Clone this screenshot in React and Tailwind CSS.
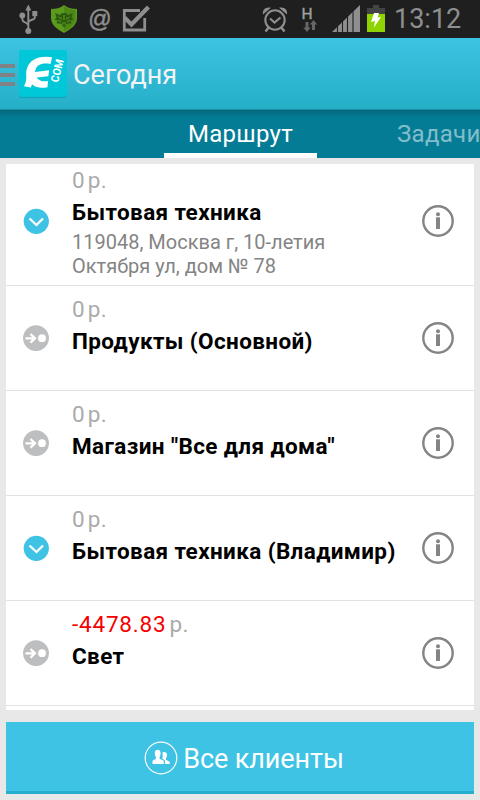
import React from "react";

const clients = [
  {
    id: 1,
    amount: "0",
    name: "Бытовая техника",
    address: ["119048, Москва г, 10-летия", "Октября ул, дом № 78"],
    visited: true,
  },
  { id: 2, amount: "0", name: "Продукты (Основной)", visited: false },
  { id: 3, amount: "0", name: 'Магазин "Все для дома"', visited: false },
  { id: 4, amount: "0", name: "Бытовая техника (Владимир)", visited: true },
  { id: 5, amount: "-4478.83", name: "Свет", visited: false },
];

const UsbIcon = () => (
  <svg className="w-5 h-8" viewBox="0 0 20 32" fill="none" stroke="#8e8e8e" strokeWidth="1.9">
    <path d="M10.300 4V28M4.300 13v3.500c0 3 6 3 6 6M16.800 11v3.500c0 3-6.500 2-6.500 5" />
    <path d="M10.300 1.500l3 6h-6z" fill="#8e8e8e" stroke="none" />
    <circle cx="4.300" cy="12.500" r="2.900" fill="#8e8e8e" stroke="none" />
    <path d="M14.300 8h5v5.200h-5z" fill="#8e8e8e" stroke="none" />
    <circle cx="10.300" cy="28" r="3" fill="#8e8e8e" stroke="none" />
  </svg>
);

const ShieldIcon = () => (
  <svg className="w-[26px] h-7" viewBox="0 0 26 28">
    <path d="M13 0c4 3 8 4 13 4v9c0 7-6 11-13 15C6 24 0 20 0 13V4c5 0 9-1 13-4z" fill="#5b9a1c" />
    <path d="M13 1.500c4 2.500 7 3.500 11.500 3.700V13c0 6-5 10-11.500 13.500z" fill="#4d8716" />
    <path
      d="M4 8l5 2 2-2h4l2 2 5-2-1.500 4.500 2 2-3 1 1 3-4 0-3.500 4-3.500-4-4 0 1-3-3-1 2-2z"
      fill="#2c5d0e"
    />
    <path
      d="M7.500 12l3.500 2.200M18.500 12l-3.500 2.200M11 18h4M13 10v5M7 15.500l3 1M19 15.500l-3 1M10.500 20l1.500-1M15.500 20l-1.500-1"
      stroke="#5b9a1c"
      strokeWidth="1"
      fill="none"
    />
  </svg>
);

const TaskIcon = () => (
  <svg className="w-7 h-[27px]" viewBox="0 0 28 27" fill="none" stroke="#8e8e8e">
    <path d="M18 5.500H2.300V25h20.400V13" strokeWidth="2.800" />
    <path d="M2.500 12.500l7 7L26.500 2" strokeWidth="4.200" />
  </svg>
);

const AlarmIcon = () => (
  <svg className="w-[26px] h-7" viewBox="0 0 26 28" fill="none" stroke="#8e8e8e" strokeWidth="2.100">
    <circle cx="13" cy="15" r="9.700" />
    <path d="M8 13.500l4.500 4 6-5" />
    <path d="M7 22l-3.500 4.500M19 22l3.500 4.500" strokeWidth="2.500" />
    <path d="M1 9.500C0 4.500 4 1.500 9 2.700zM25 9.500C26 4.500 22 1.500 17 2.700z" fill="#8e8e8e" stroke="none" />
  </svg>
);

const DataIcon = () => (
  <svg className="w-[17px] h-8" viewBox="0 0 17 32">
    <text x="-0.500" y="15.500" fontSize="15.500" fill="#a0a0a0" stroke="#a0a0a0" strokeWidth="0.400" fontFamily="Roboto, sans-serif">
      H
    </text>
    <path d="M3.500 19h3v5.500h2.200L5 29l-3.700-4.500h2.200zM10 27h3v-5.500h2.200L11.500 17l-3.700 4.500H10z" fill="#666" />
  </svg>
);

const SignalIcon = () => (
  <svg className="w-7 h-[27px]" viewBox="0 0 28 27">
    <path d="M0 27L28 0v27z" fill="#8e8e8e" />
    <path d="M5.500 20v7M10.500 15v12M15.500 10v17M21 5v22" stroke="#1f1f1f" strokeWidth="1.100" />
  </svg>
);

const BatteryIcon = () => (
  <svg className="w-[18px] h-[27px]" viewBox="0 0 18 27">
    <path d="M0 3h6V0h6v3h6v6H0z" fill="#444" />
    <path d="M0 9h18v18H0z" fill="#8fd400" />
    <path d="M7 8h5l-1.500 4.500 3.500-.500L7 22.500l1-6.500-4 1z" fill="#fff" />
  </svg>
);

const StatusBar = () => (
  <div className="flex items-center h-[38px] bg-[#1f1f1f] text-[#8e8e8e]">
    <div className="flex items-center ml-[18px]">
      <UsbIcon />
      <div className="ml-[13px]">
        <ShieldIcon />
      </div>
      <span className="w-6 ml-[11px] text-center text-[23px] leading-7 font-['Liberation_Sans',sans-serif] [-webkit-text-stroke:0.5px_#8e8e8e]">
        @
      </span>
      <div className="ml-[10px] -mt-[1px]">
        <TaskIcon />
      </div>
    </div>
    <div className="flex items-center ml-auto mr-5">
      <AlarmIcon />
      <div className="ml-[14px]">
        <DataIcon />
      </div>
      <div className="ml-[13px] -mt-[2px]">
        <SignalIcon />
      </div>
      <div className="ml-[7px] -mt-[2px]">
        <BatteryIcon />
      </div>
      <span className="w-[66px] ml-[9px] text-[27px] leading-8 whitespace-nowrap">13:12</span>
    </div>
  </div>
);

const Logo = () => (
  <svg className="w-12 h-12" viewBox="0 0 48 48">
    <rect y="1" width="48" height="47" rx="3" fill="#159fb4" />
    <rect width="48" height="47" rx="3" fill="#00c8d8" />
    <path
      d="M33 7.200C27 6.200 19 6.500 13.500 10.500C8.500 14.500 6.800 20 7.300 26C7.500 30 6.700 33 5 36.200L11.800 37.400L13 34.200C17 38 22.500 38.300 28.500 37.200L29 31C25 31.800 20.500 31.500 17.500 27.500L29.300 26.200L30.200 20.300L16 22C17 15 22 12.600 31.600 14z"
      fill="#fff"
    />
    <text
      transform="translate(39 33) rotate(-76)"
      fontSize="11"
      fontWeight="700"
      fill="#fff"
      textLength="23.500"
      lengthAdjust="spacingAndGlyphs"
      fontFamily="Roboto, sans-serif"
    >
      COM
    </text>
  </svg>
);

const Header = () => (
  <div className="flex items-center h-[72px] bg-linear-to-b from-[#3dc3e3] to-[#24afc7] border-b border-[#1b8ea6]">
    <div className="flex flex-col gap-[5px] w-[15px] mr-1 mt-[2px]">
      <span className="h-1 bg-[#808285]" />
      <span className="h-1 bg-[#808285]" />
      <span className="h-1 bg-[#808285]" />
    </div>
    <Logo />
    <h1 className="ml-[6px] mt-[2px] text-[27px] leading-8 text-[#f3f3f3]">Сегодня</h1>
  </div>
);

const Tabs = () => (
  <div className="flex h-12 bg-[#057c96] bg-linear-to-b from-[#04667b] from-0% to-[#057c96] to-15% text-[24px] leading-[48px] tracking-[0.3px] whitespace-nowrap overflow-hidden">
    <div className="w-[153px] ml-[164px] shrink-0 border-b-5 border-white text-center text-white">
      Маршрут
    </div>
    <div className="ml-[80px] text-[#82bdca]">Задачи</div>
  </div>
);

const StatusIcon = ({ visited }) =>
  visited ? (
    <svg className="w-[26px] h-[26px]" viewBox="0 0 26 26">
      <circle cx="13.300" cy="13.300" r="12.600" fill="#3ec3e4" />
      <path d="M6.500 10.500l7 6.500 6.500-6.500" fill="none" stroke="#fff" strokeWidth="2.300" />
    </svg>
  ) : (
    <svg className="w-[26px] h-[26px]" viewBox="0 0 26 26">
      <circle cx="13" cy="13.200" r="12.900" fill="#bdbec0" />
      <path d="M2.500 13.300h9M7.500 9l4.500 4.300-4.500 4.300" fill="none" stroke="#fff" strokeWidth="2.300" />
      <circle cx="19" cy="13.200" r="3.900" fill="#fff" />
    </svg>
  );

const InfoIcon = () => (
  <svg className="w-8 h-8" viewBox="0 0 32 32">
    <circle cx="16" cy="16" r="14.700" fill="none" stroke="#848484" strokeWidth="2.400" />
    <circle cx="16" cy="9.300" r="2" fill="#848484" />
    <path d="M14 12.300h4V24h-4z" fill="#848484" />
  </svg>
);

const ClientRow = ({ client }) => (
  <div className="flex items-center shrink-0 min-h-[105px] border-b border-[#e2e2e2]">
    <div className="w-[26px] ml-[17px] shrink-0">
      <StatusIcon visited={client.visited} />
    </div>
    <div className="flex-1 self-stretch ml-[23px] py-[7px]">
      <p className="text-[22.5px] leading-8 text-[#aaa]">
        <span
          className={
            client.amount.startsWith("-") ? "text-[#f60000] tracking-[0.8px]" : ""
          }
        >
          {client.amount}
        </span>
        <span className="ml-[3px] tracking-[0.4px]">р.</span>
      </p>
      <p className="text-[22.5px] leading-8 tracking-[0.38px] font-bold text-black whitespace-nowrap">
        {client.name}
      </p>
      {client.address && (
        <div className="mt-[2px] text-[20px] leading-6 text-[#848484] whitespace-nowrap">
          {client.address.map((line) => (
            <p key={line}>{line}</p>
          ))}
        </div>
      )}
    </div>
    <div className="w-8 mr-5 shrink-0">
      <InfoIcon />
    </div>
  </div>
);

const App = () => {
  return (
    <div className="flex flex-col w-[480px] h-[800px] overflow-hidden bg-[#e8e8e8] font-[Roboto,sans-serif]">
      <StatusBar />
      <Header />
      <Tabs />

      {/* Client list, scrolled down a little */}
      <div className="flex flex-col h-[546px] mx-[6px] mt-[6px] bg-white overflow-hidden">
        <div className="flex flex-col -mt-[7px]">
          {clients.map((client) => (
            <ClientRow key={client.id} client={client} />
          ))}
        </div>
      </div>

      <button className="flex items-center justify-center h-[72px] mx-[6px] mt-3 pt-1 pl-2 bg-[#3ec3e4] border-b-3 border-[#24adcd] text-[27px] text-white">
        <svg className="w-[34px] h-[34px] mr-[5px] -mt-[2px]" viewBox="0 0 34 34">
          <circle cx="17" cy="17" r="15.800" fill="none" stroke="#fff" strokeWidth="1.200" />
          <path
            d="M10.800 12c0-4.300 5.800-4.300 5.800 0 0 2-.500 3.200-1 4v1.800l4.200 2V23H8.500v-3.200l3.400-2V16c-.600-.800-1.100-2-1.100-4z"
            fill="#fff"
          />
          <path
            d="M18.300 12.500c1-2.500 4.700-1.500 4.700 1.200 0 1.500-.500 2.500-1 3.300v1.700l3.700 2.100V23H21v-3.500l-2.700-2c.500-1.500.600-3.500 0-5z"
            fill="#fff"
          />
        </svg>
        <span className="pt-[2px] tracking-[-0.1px]">Все клиенты</span>
      </button>
    </div>
  );
};

export default App;
